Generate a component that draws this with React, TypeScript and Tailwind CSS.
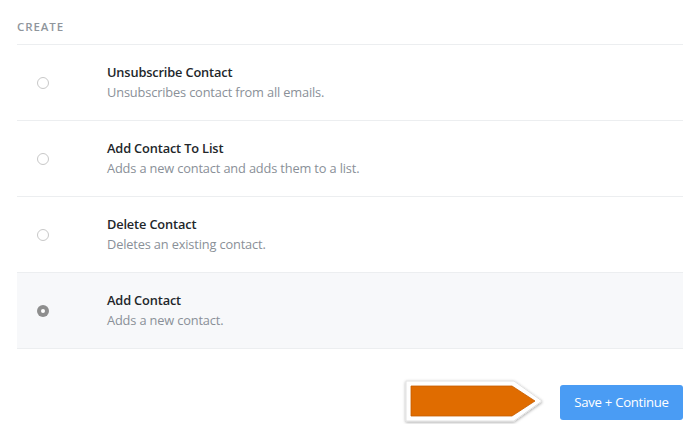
import React from "react";

const items = [
  { title: "Unsubscribe Contact", desc: "Unsubscribes contact from all emails.", selected: false },
  { title: "Add Contact To List", desc: "Adds a new contact and adds them to a list.", selected: false },
  { title: "Delete Contact", desc: "Deletes an existing contact.", selected: false },
  { title: "Add Contact", desc: "Adds a new contact.", selected: true },
];

function Radio({ selected }: { selected: boolean }) {
  if (selected) {
    return (
      <div className="w-[12px] h-[12px] rounded-full bg-[#8e8e8e] flex items-center justify-center">
        <div className="w-[4px] h-[4px] rounded-full bg-white" />
      </div>
    );
  }
  return <div className="w-[12px] h-[12px] rounded-full border border-[#c8c8c8] bg-white" />;
}

export default function App() {
  return (
    <div className="w-[700px] h-[442px] bg-white px-[17px] pt-[19px] font-['Open_Sans',sans-serif]">
      <div className="text-[11.5px] font-semibold tracking-[0.9px] text-[#8f959c] leading-[16px] h-[25px]">CREATE</div>
      <div className="border-t border-[#eceef0]">
        {items.map((it) => (
          <div
            key={it.title}
            className={`flex items-center h-[76px] border-b border-[#eceef0] ${it.selected ? "bg-[#f7f8fa]" : ""}`}
          >
            <div className="w-[90px] pl-[20px] flex items-center">
              <Radio selected={it.selected} />
            </div>
            <div className="flex flex-col tracking-[-0.15px]">
              <div className="text-[12.8px] font-semibold text-[#22262a] leading-[19px]">{it.title}</div>
              <div className="text-[12.8px] text-[#8a9098] leading-[20px]">{it.desc}</div>
            </div>
          </div>
        ))}
      </div>
      <div className="flex justify-end items-center mt-[32px] gap-[12px]">
        <svg width="148" height="46" viewBox="0 0 148 46" className="-mt-[3px]">
          <defs>
            <filter id="sh" x="-10%" y="-20%" width="120%" height="150%">
              <feDropShadow dx="0" dy="1" stdDeviation="1.4" floodColor="#000" floodOpacity="0.35" />
            </filter>
          </defs>
          <path d="M6 3 H114 L142 23 L114 43 H6 Z" fill="#fff" stroke="#e2e2e2" strokeWidth="1" filter="url(#sh)" />
          <path d="M11 8 H112 L135 23 L112 38 H11 Z" fill="#e06c00" stroke="#c55d00" strokeWidth="0.8" />
        </svg>
        <button className="w-[123px] h-[35px] rounded-[3px] bg-[#4a9cf4] text-white text-[13.2px] tracking-[-0.3px] font-normal">
          Save + Continue
        </button>
      </div>
    </div>
  );
}
